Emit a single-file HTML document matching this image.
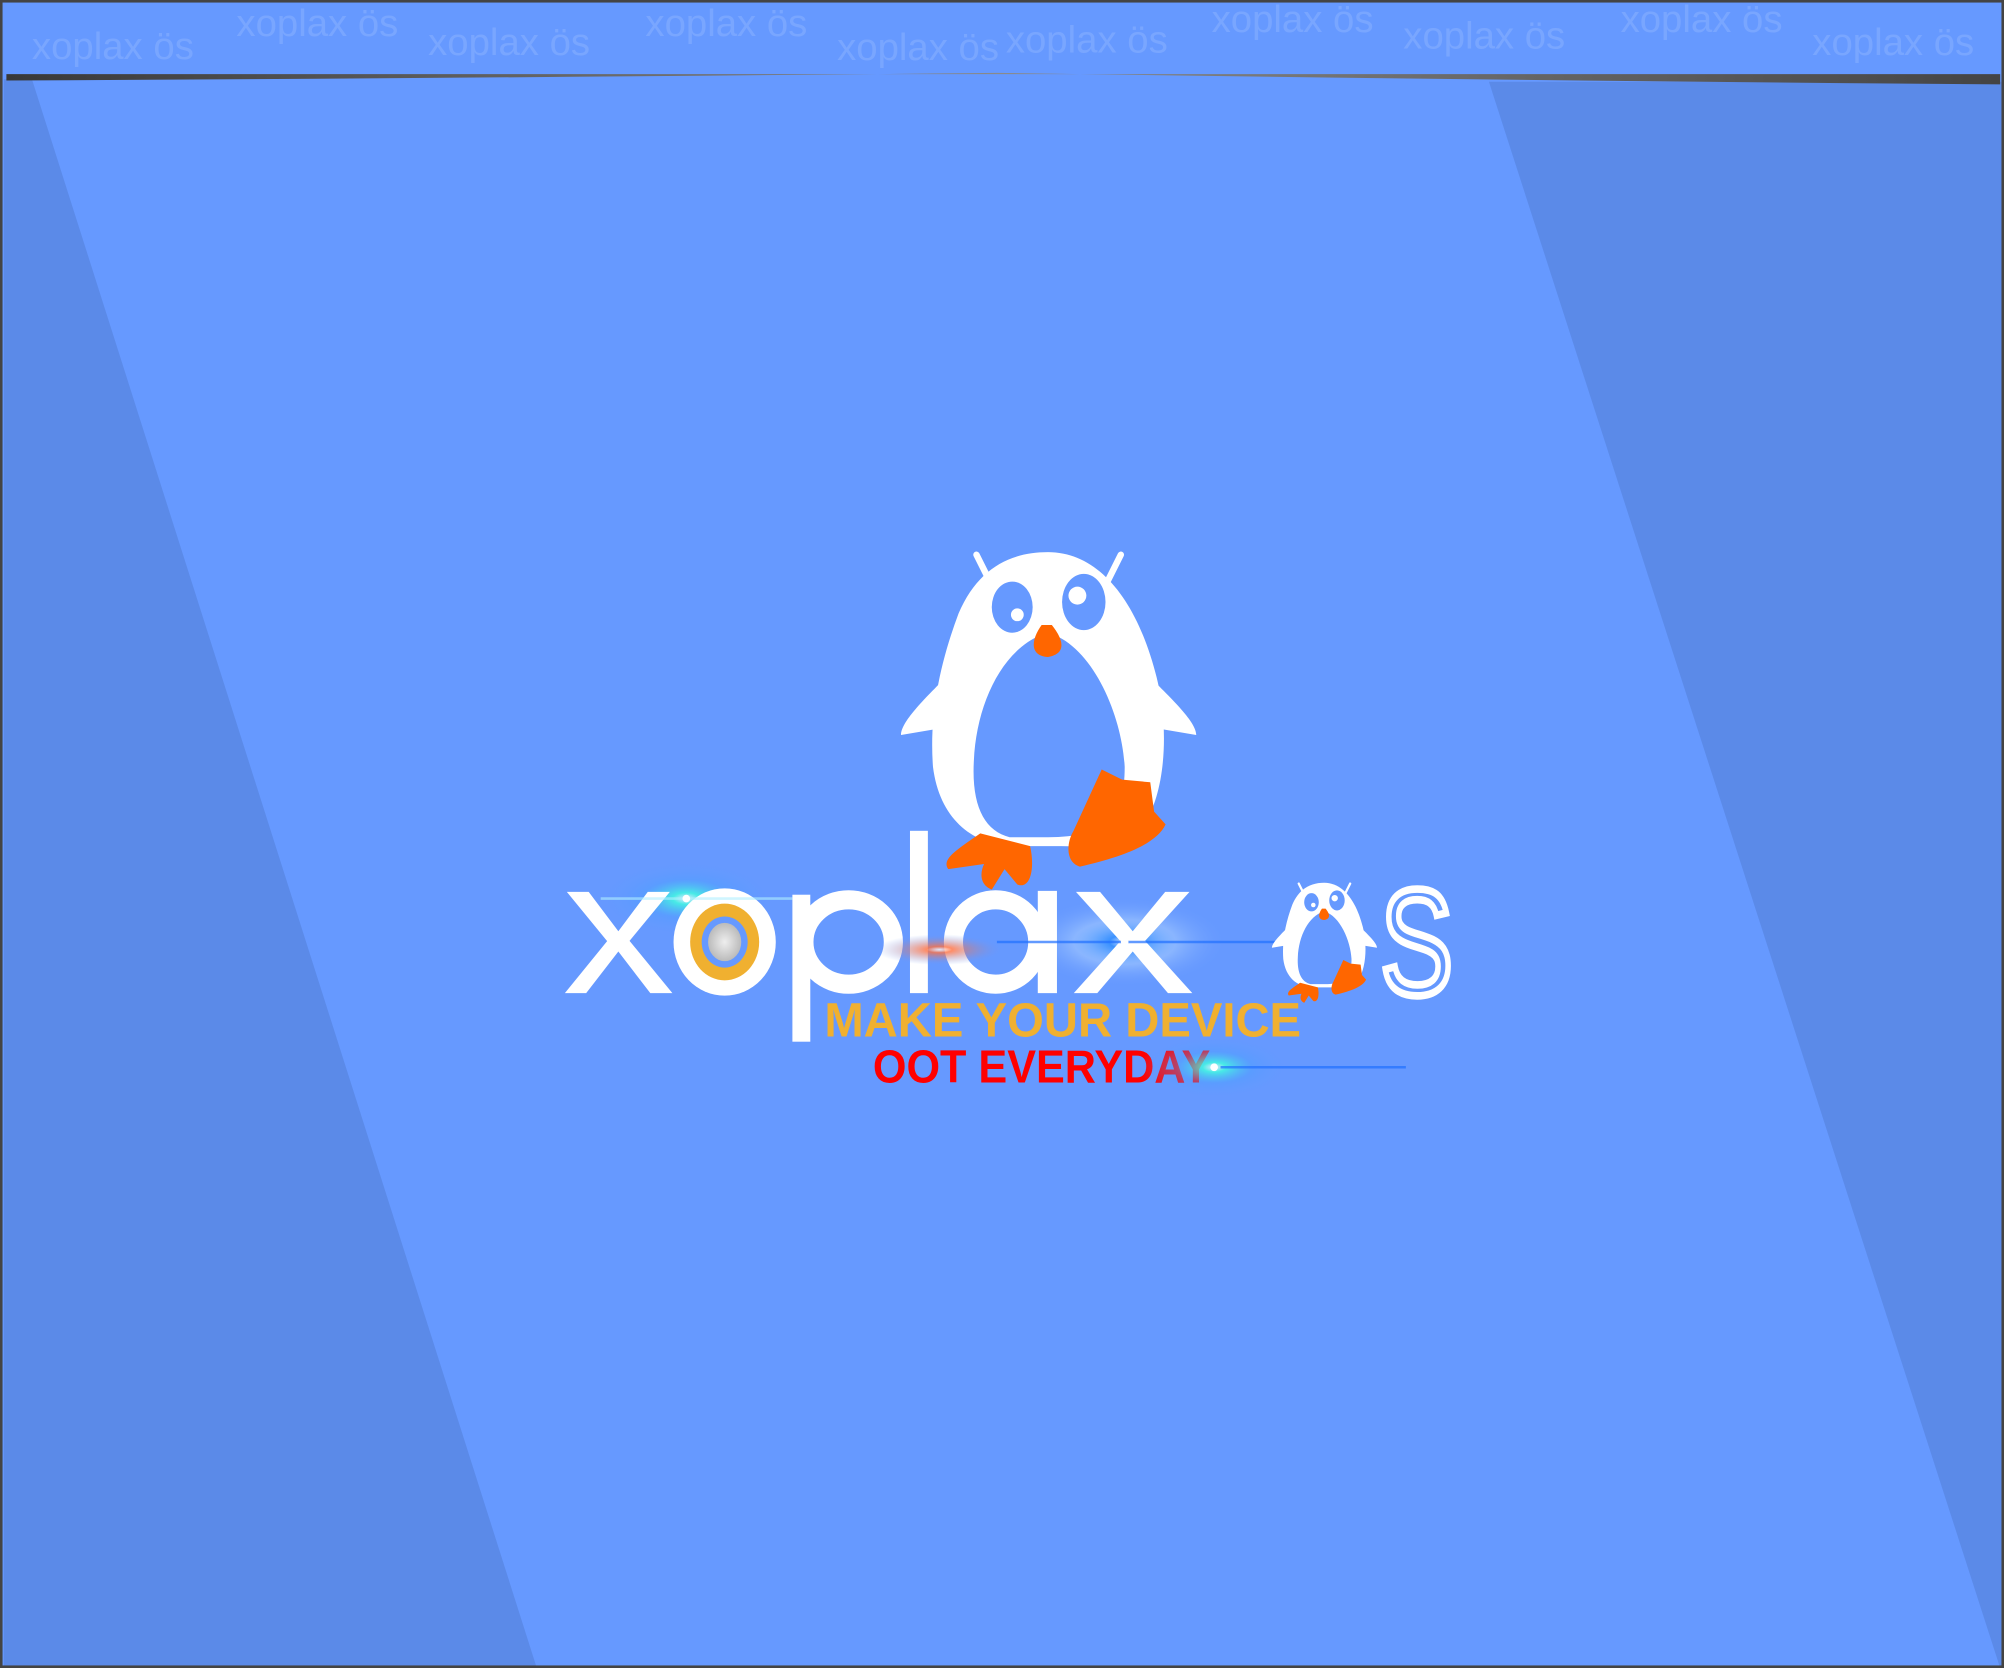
<!DOCTYPE html>
<html><head><meta charset="utf-8"><style>
html,body{margin:0;padding:0;background:#6699ff;}
svg{display:block;}
</style></head><body>
<svg width="2004" height="1668" viewBox="0 0 1568 1305" preserveAspectRatio="none" xmlns="http://www.w3.org/2000/svg">
<defs>
<linearGradient id="band" x1="0" x2="1" y1="0" y2="0">
<stop offset="0" stop-color="#383838"/><stop offset="0.5" stop-color="#8a8a8a"/><stop offset="1" stop-color="#444"/>
</linearGradient>
<radialGradient id="gc"><stop offset="0" stop-color="#ffffff"/><stop offset="0.15" stop-color="#40ffe0"/><stop offset="0.5" stop-color="#4aa0ff" stop-opacity="0.5"/><stop offset="1" stop-color="#6699ff" stop-opacity="0"/></radialGradient>
<radialGradient id="gb"><stop offset="0" stop-color="#ffffff"/><stop offset="0.15" stop-color="#3090ff"/><stop offset="0.5" stop-color="#c0e0ff" stop-opacity="0.5"/><stop offset="1" stop-color="#6699ff" stop-opacity="0"/></radialGradient>
<radialGradient id="go"><stop offset="0" stop-color="#ffffff"/><stop offset="0.2" stop-color="#ff7040"/><stop offset="1" stop-color="#6699ff" stop-opacity="0"/></radialGradient>
<radialGradient id="ring"><stop offset="0" stop-color="#eee"/><stop offset="1" stop-color="#bbb"/></radialGradient>
<g id="peng">
<line x1="764" y1="434" x2="775" y2="456" stroke="#fff" stroke-width="5" stroke-linecap="round"/>
<line x1="877" y1="434" x2="866" y2="456" stroke="#fff" stroke-width="5" stroke-linecap="round"/>
<path d="M742,528 C722,548 705,565 705,575 L735,570 Z" fill="#fff"/>
<path d="M898,528 C918,548 936,565 936,575 L906,570 Z" fill="#fff"/>
<path d="M820,432 C860,432 890,470 905,530 C915,570 912,620 895,645 C880,665 850,662 820,662 L790,662 C760,660 735,640 730,600 C727,560 735,520 750,480 C765,445 790,432 820,432 Z" fill="#fff"/>
<path d="M820,495 C855,505 878,560 880,600 C880,640 865,655 820,655 L790,655 C770,650 760,630 762,595 C764,550 785,505 820,495 Z" fill="#6699ff"/>
<ellipse cx="792" cy="475" rx="16" ry="20" fill="#6699ff"/>
<circle cx="796" cy="481" r="5" fill="#fff"/>
<ellipse cx="848" cy="471" rx="17" ry="22" fill="#6699ff"/>
<circle cx="843" cy="466" r="7" fill="#fff"/>
<path d="M815,489 L823,489 C831,499 836,511 820,514 C805,513 807,500 815,489Z" fill="#ff6600"/>
<path d="M862,602 L878,610 L900,612 L903,635 L912,645 C905,660 880,670 845,678 C834,675 834,660 840,650 Z" fill="#ff6600"/>
<path d="M767,652 L806,662 C810,680 806,696 796,692 L786,680 L776,696 C766,692 767,682 770,676 L742,680 C736,672 750,664 767,652 Z" fill="#ff6600"/>
</g>
</defs>
<rect width="1568" height="1305" fill="#6699ff"/>
<polygon points="3,62 25,62 420,1305 3,1305" fill="#5b8ae8"/>
<polygon points="1165,64 1566,64 1566,1305 1565,1305" fill="#5b8ae8"/>
<g font-family="Liberation Sans, sans-serif" font-size="30" fill="#ffffff" fill-opacity="0.13">
<text x="25" y="46">xoplax ös</text><text x="185" y="28">xoplax ös</text>
<text x="335" y="43">xoplax ös</text><text x="505" y="28">xoplax ös</text>
<text x="655" y="47">xoplax ös</text><text x="787" y="41">xoplax ös</text>
<text x="948" y="25">xoplax ös</text><text x="1098" y="38">xoplax ös</text>
<text x="1268" y="25">xoplax ös</text><text x="1418" y="43">xoplax ös</text>
</g>
<path d="M5,58 L1565,58 L1565,66 Q1165,63 780,57 Q400,61 5,63 Z" fill="url(#band)"/>
<use href="#peng"/>
<ellipse cx="537" cy="703" rx="70" ry="30" fill="url(#gc)" opacity="0.8"/>
<ellipse cx="880" cy="737" rx="80" ry="35" fill="url(#gb)" opacity="0.8"/>
<g font-family="Liberation Sans, sans-serif" fill="#fff">
<text x="440" y="777" font-size="150" textLength="88" lengthAdjust="spacingAndGlyphs">x</text>
<text x="838" y="777" font-size="150" textLength="97" lengthAdjust="spacingAndGlyphs">x</text>
</g>
<!-- p -->
<ellipse cx="664" cy="737" rx="35" ry="33" fill="none" stroke="#fff" stroke-width="15"/>
<rect x="620" y="700" width="14" height="115" fill="#fff"/>
<!-- l -->
<rect x="712" y="650" width="14" height="127" fill="#fff"/>
<!-- a -->
<ellipse cx="779" cy="737" rx="33" ry="33" fill="none" stroke="#fff" stroke-width="15"/>
<rect x="812" y="697" width="15" height="80" fill="#fff"/>
<ellipse cx="567" cy="737" rx="40" ry="42" fill="#fff"/>
<ellipse cx="567" cy="737" rx="27" ry="30" fill="#f0b030"/>
<ellipse cx="567" cy="737" rx="18" ry="20" fill="#6699ff"/>
<ellipse cx="567" cy="737" rx="13" ry="15" fill="url(#ring)"/>
<ellipse cx="735" cy="743" rx="50" ry="12" fill="url(#go)" opacity="0.8"/>
<line x1="470" y1="703" x2="620" y2="703" stroke="#b0f0ff" stroke-width="2" opacity="0.6"/>
<line x1="780" y1="737" x2="1000" y2="737" stroke="#2070ff" stroke-width="2" opacity="0.7"/>
<circle cx="537" cy="703" r="3" fill="#fff"/><circle cx="880" cy="737" r="3" fill="#fff"/>
<g transform="translate(744.2,536.8) scale(0.356)"><use href="#peng"/></g>
<text x="1080" y="778" font-family="Liberation Sans, sans-serif" font-size="118" fill="none" stroke="#fff" stroke-width="6" textLength="57" lengthAdjust="spacingAndGlyphs">S</text>
<text x="645" y="811" font-family="Liberation Sans, sans-serif" font-weight="bold" font-size="38" fill="#f0b030" textLength="373" lengthAdjust="spacingAndGlyphs">MAKE YOUR DEVICE</text>
<text x="683" y="847" font-family="Liberation Sans, sans-serif" font-weight="bold" font-size="36" fill="#ff0000" textLength="264" lengthAdjust="spacingAndGlyphs">OOT EVERYDAY</text>
<ellipse cx="950" cy="835" rx="60" ry="25" fill="url(#gc)" opacity="0.8"/>
<line x1="955" y1="835" x2="1100" y2="835" stroke="#2070ff" stroke-width="2" opacity="0.7"/>
<circle cx="950" cy="835" r="3" fill="#fff"/>
<rect x="1" y="1" width="1566" height="1303" fill="none" stroke="#444" stroke-width="2"/>
</svg>
</body></html>
